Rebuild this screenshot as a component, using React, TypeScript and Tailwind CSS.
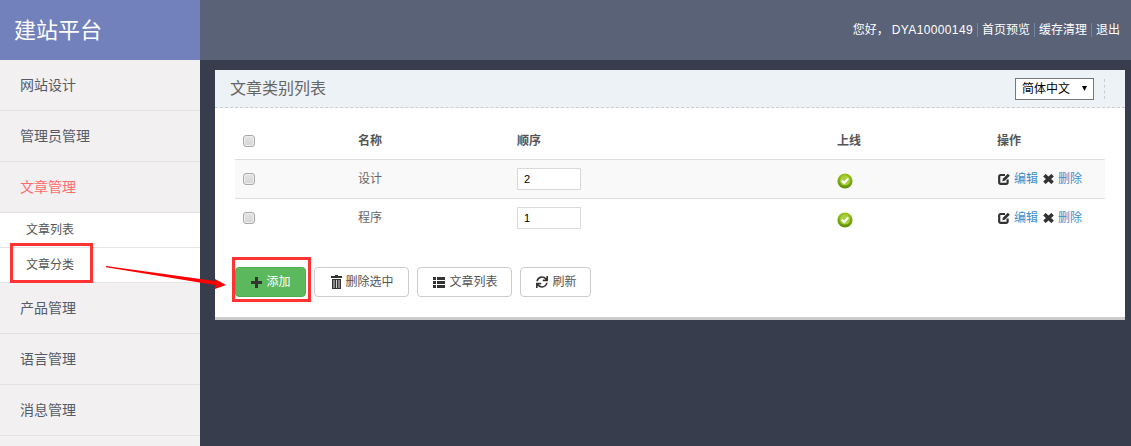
import React from "react";
import { FaSync } from "react-icons/fa";

const font = { fontFamily: '"Liberation Sans","Noto Sans CJK SC",sans-serif' };

function Check() {
  return <input type="checkbox" className="block appearance-none w-[12px] h-[12px] rounded-[3px] border border-[#a9a9a9] bg-gradient-to-b from-[#e4e4e4] to-[#d6d6d6] shadow-[inset_0_0_0_1px_#eeeeee]" />;
}

function Ok() {
  return (
    <svg width="16" height="16" viewBox="0 0 16 16" className="block mt-[3px]">
      <defs>
        <linearGradient id="okg" x1="0" y1="0" x2="0" y2="1">
          <stop offset="0" stopColor="#9cc520" />
          <stop offset="1" stopColor="#5f8f04" />
        </linearGradient>
      </defs>
      <circle cx="8" cy="8" r="7.6" fill="url(#okg)" />
      <circle cx="8" cy="7.6" r="5" fill="#a8cf3c" />
      <path d="M4.8 7.6 L7.2 10 L11.2 5.4" fill="none" stroke="#ffffff" strokeWidth="2.2" />
    </svg>
  );
}

function EditIcon() {
  return (
    <svg width="13" height="12" viewBox="0 0 13 12" className="block">
      <path d="M7 2 H2.6 A1.4 1.4 0 0 0 1.2 3.4 V9.4 A1.4 1.4 0 0 0 2.6 10.8 H8.2 A1.4 1.4 0 0 0 9.6 9.4 V6.4" fill="none" stroke="#333333" strokeWidth="2.2" />
      <path d="M4.4 8.2 L4.8 5.8 L9.8 0.8 L11.8 2.8 L6.8 7.8 Z" fill="#333333" />
    </svg>
  );
}

function XIcon() {
  return (
    <svg width="11" height="10" viewBox="0 0 11 10" className="block">
      <path d="M1.4 1.2 L9.6 8.8 M9.6 1.2 L1.4 8.8" stroke="#333333" strokeWidth="3.6" />
    </svg>
  );
}

function PlusIcon() {
  return (
    <svg width="11" height="11" viewBox="0 0 11 11" className="block">
      <path d="M4 0 H7 V4 H11 V7 H7 V11 H4 V7 H0 V4 H4 Z" fill="#333333" />
    </svg>
  );
}

function TrashIcon() {
  return (
    <svg width="11" height="14" viewBox="0 0 11 14" className="block">
      <path d="M4 0 H7 V1 H11 V3 H0 V1 H4 Z" fill="#333333" />
      <path d="M1 4 H10 V14 H1 Z" fill="#333333" />
      <path d="M3 5 V13 M5.5 5 V13 M8 5 V13" stroke="#ffffff" strokeWidth="0.8" />
    </svg>
  );
}

function ListIcon() {
  return (
    <svg width="12" height="11" viewBox="0 0 12 11" className="block">
      <path d="M0 0 H3 V3 H0 Z M4 0 H12 V3 H4 Z M0 4 H3 V7 H0 Z M4 4 H12 V7 H4 Z M0 8 H3 V11 H0 Z M4 8 H12 V11 H4 Z" fill="#333333" />
    </svg>
  );
}

const cols = "grid grid-cols-[123px_159px_320px_160px_108px] items-center border-b";

function Row({ name, order, striped, last }: { name: string; order: string; striped?: boolean; last?: boolean }) {
  return (
    <div className={`${cols} h-[39px] ${last ? "border-transparent" : "border-[#dddddd]"} ${striped ? "bg-[#f9f9f9]" : ""}`}>
      <div className="pl-2"><Check /></div>
      <div className="text-xs text-[#666666]">{name}</div>
      <div>
        <input readOnly value={order} className="block w-[64px] h-[22px] border border-[#d9d9d9] bg-white pl-[6px] text-[11px] text-black outline-none" />
      </div>
      <div><Ok /></div>
      <div className="flex items-center text-xs">
        <span className="ml-[1px]"><EditIcon /></span>
        <span className="text-[#428bca] ml-[3px]">编辑</span>
        <span className="ml-[5px]"><XIcon /></span>
        <span className="text-[#428bca] ml-[4px]">删除</span>
      </div>
    </div>
  );
}

function Btn({ icon, label, w, gap }: { icon: React.ReactNode; label: string; w: string; gap: string }) {
  return (
    <button className={`${w} ${gap} h-[30px] pl-[2px] flex items-center justify-center rounded border border-[#cccccc] bg-white text-xs text-[#555555]`}>
      {icon}
      {label}
    </button>
  );
}

const nav = ["网站设计", "管理员管理", "文章管理"];
const nav2 = ["产品管理", "语言管理", "消息管理"];

function NavItem({ t, active }: { t: string; active?: boolean }) {
  return (
    <div className={`h-[51px] flex items-center pl-5 text-[14px] border-b border-[#e2e0e1] ${active ? "text-[#ff6c6c]" : "text-[#555b66]"}`}>
      {t}
    </div>
  );
}

function Sep() {
  return <span className="w-px h-[14px] mx-1 bg-[#6e86a8]" />;
}

export default function App() {
  return (
    <div style={font} className="relative w-[1131px] h-[446px] overflow-hidden bg-[#383d4e] flex">
      <aside className="w-[200px] shrink-0 flex flex-col bg-[#f2f0f1]">
        <div className="h-[60px] bg-[#7281bb] flex items-center pl-[14px] text-[22px] text-white">建站平台</div>
        {nav.map((t, i) => <NavItem key={t} t={t} active={i === 2} />)}
        <div className="bg-white">
          <div className="h-[35px] flex items-center pl-[26px] text-xs text-[#555555] border-b border-[#e4e4e4]">文章列表</div>
          <div className="h-[35px] flex items-center pl-[26px] text-xs text-[#555555] border-b border-[#e4e4e4]">文章分类</div>
        </div>
        {nav2.map((t) => <NavItem key={t} t={t} />)}
      </aside>
      <main className="flex-1 flex flex-col">
        <header className="h-[60px] bg-[#5a6277] flex items-center justify-end pr-[11px] text-xs text-white">
          <span>您好，</span>
          <span className="ml-[3px] tracking-[0.36px]">DYA10000149</span>
          <Sep />
          <span>首页预览</span>
          <Sep />
          <span>缓存清理</span>
          <Sep />
          <span>退出</span>
        </header>
        <section className="mt-[10px] ml-[15px] w-[910px] h-[250px] bg-white border-b-[3px] border-[#cccccc]">
          <div className="h-[38px] bg-[#edf2f6] border-b border-dashed border-[#cccccc] flex items-center pl-[15px] pr-[20px]">
            <span className="text-base text-[#666666]">文章类别列表</span>
            <div className="ml-auto flex items-center h-[37px]">
              <div className="w-[79px] h-[22px] border border-[#767676] bg-white flex items-center pl-[6px] pr-[6px] text-xs text-black">
                <span>简体中文</span>
                <svg width="5" height="5" viewBox="0 0 5 5" className="ml-auto block">
                  <path d="M0 0 H5 L2.5 5 Z" fill="#000000" />
                </svg>
              </div>
              <div className="ml-[10px] h-[20px] border-r border-dashed border-[#cccccc]" />
            </div>
          </div>
          <div className="mx-5 mt-[12px]">
            <div className={`${cols} h-[40px] pt-[3px] border-[#dddddd] text-xs font-bold text-[#555555]`}>
              <div className="pl-2"><Check /></div>
              <div>名称</div>
              <div>顺序</div>
              <div>上线</div>
              <div>操作</div>
            </div>
            <Row name="设计" order="2" striped />
            <Row name="程序" order="1" last />
          </div>
          <div className="flex gap-2 ml-5 mt-[29px]">
            <button className="w-[71px] h-[30px] pl-[1px] flex items-center justify-center gap-[4px] rounded bg-[#5cb85c] border border-[#4cae4c] text-xs text-white">
              <PlusIcon />
              添加
            </button>
            <Btn w="w-[95px]" gap="gap-[3px]" label="删除选中" icon={<TrashIcon />} />
            <Btn w="w-[95px]" gap="gap-[4px]" label="文章列表" icon={<ListIcon />} />
            <Btn w="w-[71px]" gap="gap-[4px]" label="刷新" icon={<FaSync className="text-[#333333] text-xs" />} />
          </div>
        </section>
      </main>

      <div className="absolute left-[10px] top-[243px] w-[83px] h-[40px] border-[3px] border-[#ff3333]" />
      <div className="absolute left-[232px] top-[257px] w-[79px] h-[45px] border-[3px] border-[#ff3333]" />
      <svg className="absolute left-[100px] top-[260px]" width="130" height="32" viewBox="0 0 130 32">
        <polygon points="6,6 115,21 115,19 126,25 115,29 115,25 6,7.2" fill="#ff0000" />
      </svg>
    </div>
  );
}
